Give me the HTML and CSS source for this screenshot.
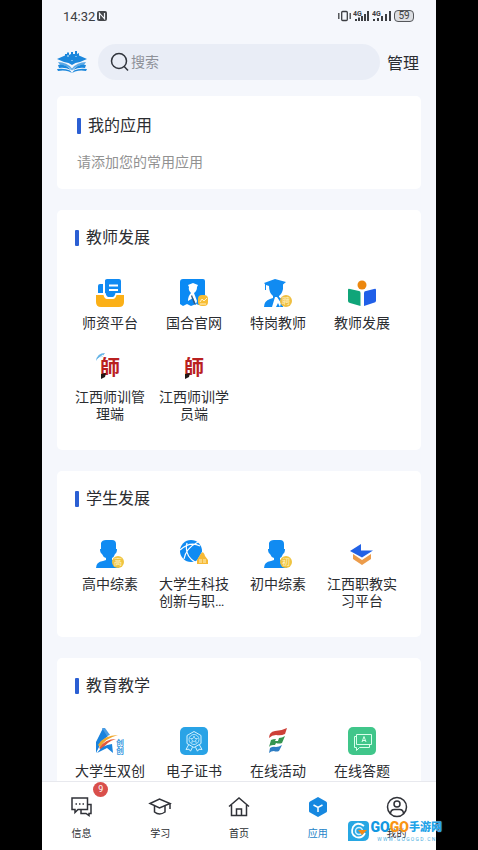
FILE: index.html
```html
<!DOCTYPE html>
<html lang="zh-CN">
  <head>
    <title>应用</title>
    <meta charset="utf-8" />
    <meta name="viewport" content="width=device-width, initial-scale=1" />
    <link rel="stylesheet" href="styles.css">
  </head>
  <body>
    <div class="phone">
      <div class="status-bar">
        <div class="status-left">
          <span>14:32</span>
          <svg width="10" height="10" viewBox="0 0 10 10">
            <rect width="10" height="10" rx="2" fill="#44464a" />
            <path d="M2.5 8V2.2L7.5 7.8V2" fill="none" stroke="#f5f7fc" stroke-width="1.2" />
          </svg>
        </div>
        <div class="status-right">
          <svg width="13" height="12" viewBox="0 0 13 12" fill="none" stroke="#3c3e42" stroke-width="1.3">
            <rect x="3.7" y="1.5" width="5.6" height="9" rx="1" />
            <path d="M.8 3v6M12.2 3v6" />
          </svg>
          <svg width="17" height="12" viewBox="0 0 17 12">
            <text x="0" y="6" class="net">4G</text>
            <path d="M3 11V9M6 11V7.500M9 11V6M12 11V4M15 11V1" stroke="#3c3e42" stroke-width="2" />
          </svg>
          <svg width="20" height="12" viewBox="0 0 20 12">
            <text x="0" y="6" class="net">4G</text>
            <path d="M2 11V9M6 11V8M10 11V6M14 11V4M18 11V1" stroke="#3c3e42" stroke-width="2" />
          </svg>
          <span class="battery">59</span>
        </div>
      </div>

      <header class="top-bar">
        <svg class="logo" width="30" height="22" viewBox="0 0 30 22" fill="#1b87dc">
          <path d="M0 8L8 4.500V3h2V1.500h2V4l2-1V1h2v2h2V0h2v3l2-1v2.500L30 8l-7 3q-5 .5-8 3-3-2.500-8-3z" />
          <path d="M1 11q9 0 14 6.500Q20 11 29 11l-2 3q-8 0-12 5.500Q11 14 3 14z" opacity=".7" />
          <path d="M1 14q8-1 13 5-6-3-12-2zM29 14q-8-1-13 5 6-3 12-2zM0 18q8-1 13 1.500L15 22l2-2.500q5-2.500 13-1.500l-1 2q-6-1-11 .5L15 22l-3-1.500Q7 19 1 20z" />
          <path d="M11 6V4M15 10V9M19 6V5" stroke="#d8ecfb" />
        </svg>
        <label class="search">
          <svg width="20" height="20" viewBox="0 0 20 20" fill="none" stroke="#30343c" stroke-width="1.5">
            <circle cx="9" cy="9" r="7.500" />
            <path d="M14.200 14.500L18 18.500" />
          </svg>
          <input type="text" placeholder="搜索" aria-label="搜索" />
        </label>
        <button class="manage">管理</button>
      </header>

      <main class="content">
        <section class="card mine">
          <h2>我的应用</h2>
          <p>请添加您的常用应用</p>
        </section>

        <section class="card">
          <h2>教师发展</h2>
          <div class="apps">
            <a class="app" href="#">
              <svg width="28" height="28" viewBox="0 0 28 28">
                <path d="M0 16h7.500q1 4 3.500 4h6q2.500 0 3.500-4H28v7q0 5-5 5H5q-5 0-5-5z" fill="#fbb017" />
                <path d="M9 1.500Q9 0 11 0h12q2 0 2 2v12h-5.500q-1 4-3 4h-4q-2 0-3-4H9z" fill="#108af3" />
                <path d="M2 7q0-2 2-2h3v9H2z" fill="#108af3" />
                <path d="M13 6.500h9M13 11h9" stroke="#fff" stroke-width="2" />
              </svg>
              <span>师资平台</span>
            </a>
            <a class="app" href="#">
              <svg width="28" height="28" viewBox="0 0 28 28">
                <path d="M0 3q0-3 3-3h20q2 0 2 2v22l-6 2-3-1-5 2-4-2-4 2-3-2z" fill="#0b8af4" />
                <path d="M8 6l5-2 5 2-1 2q0 4-3 6l3 8-1 3-3-6-5 3H8q0-5 3-8-3-3-2-6z" fill="#fff" />
                <path d="M12 16l4 10-2-1-3-8z" fill="#345a80" />
                <rect x="18" y="16" width="10" height="11" rx="4" fill="#f8bd35" />
                <path d="M20 23l2-3 2 2 3-3M20 25h6" stroke="#fff3c9" fill="none" />
              </svg>
              <span>国合官网</span>
            </a>
            <a class="app" href="#">
              <svg width="28" height="28" viewBox="0 0 28 28">
                <path d="M0 4L11 0l11 3-3 2.500V10q-1 5-4 7v1l4 3v7H0q0-6 6-8l3-1v-2q-4-3-4-10L2 6v5H1V5z" fill="#108bf2" />
                <path d="M11 18l-3 10h4l2-4 2 4 1-4-4-6z" fill="#fff" />
                <circle cx="22" cy="22" r="6" fill="#efbf42" />
                <text x="22" y="25" class="badge-text">聘</text>
              </svg>
              <span>特岗教师</span>
            </a>
            <a class="app" href="#">
              <svg width="28" height="28" viewBox="0 0 28 28">
                <circle cx="14" cy="6" r="4.500" fill="#ec870e" />
                <path d="M2 10l9 2q1.500 0 1.500 2v13L2 24q-2-.5-2-2V11q0-2 2-1z" fill="#10a579" />
                <path d="M26 10l-8 2q-2 0-2 2v13l9-3q3-.5 3-2V11q0-2-2-1z" fill="#205fe8" />
              </svg>
              <span>教师发展</span>
            </a>
            <a class="app" href="#">
              <svg width="28" height="28" viewBox="0 0 28 28">
                <path d="M0 8Q1 0 9 0L6 4Q2 4 0 8z" fill="#66b4e6" />
                <path d="M2 6l5-4" stroke="#fff" />
                <text x="14" y="22" class="shi">師</text>
                <path d="M5 21l5-1-1 4-4 2z" fill="#211816" />
              </svg>
              <span>江西师训管理端</span>
            </a>
            <a class="app" href="#">
              <svg width="28" height="28" viewBox="0 0 28 28">
                <text x="14" y="22" class="shi">師</text>
                <path d="M5 21l5-1-1 4-4 2z" fill="#211816" />
              </svg>
              <span>江西师训学员端</span>
            </a>
          </div>
        </section>

        <section class="card">
          <h2>学生发展</h2>
          <div class="apps">
            <a class="app" href="#">
              <svg width="28" height="28" viewBox="0 0 28 28">
                <path d="M5 3q1-3 5-3h6q4 0 4 4v5h1q0 4-2 5-1 3-3 4v2l7 3v5H0q0-6 7-7l3-1v-2q-3-1-4-4-2-1-2-5h1z" fill="#108bf2" />
                <circle cx="22" cy="22" r="6" fill="#efc442" />
                <text x="22" y="25" class="badge-text">高</text>
              </svg>
              <span>高中综素</span>
            </a>
            <a class="app" href="#">
              <svg width="28" height="28" viewBox="0 0 28 28">
                <circle cx="11" cy="11" r="11" fill="#108bf2" />
                <path d="M0 10Q10 1 20 6M4 19Q6 8 18 2M7 3Q4 15 15 22" fill="none" stroke="#fff" stroke-width="1.200" />
                <path d="M15 24l8-14 6 14z" fill="#fff" />
                <path d="M20 15q3-6 5 1l3 4v4H17v-4z" fill="#f6b936" />
                <path d="M19 20h7M19 22h7" stroke="#fff3c4" stroke-dasharray="3 1" />
              </svg>
              <span>大学生科技创新与职业发展</span>
            </a>
            <a class="app" href="#">
              <svg width="28" height="28" viewBox="0 0 28 28">
                <path d="M5 3q1-3 5-3h6q4 0 4 4v5h1q0 4-2 5-1 3-3 4v2l7 3v5H0q0-6 7-7l3-1v-2q-3-1-4-4-2-1-2-5h1z" fill="#108bf2" />
                <circle cx="22" cy="22" r="6" fill="#efc442" />
                <text x="22" y="25" class="badge-text">初</text>
              </svg>
              <span>初中综素</span>
            </a>
            <a class="app" href="#">
              <svg width="28" height="28" viewBox="0 0 28 28">
                <path d="M5 14l9 6 9-6v5l-9 6-9-6z" fill="#ec9c4b" />
                <path d="M13 4v6.500h12L14 17.500 2 11z" fill="#2262e6" />
              </svg>
              <span>江西职教实习平台</span>
            </a>
          </div>
        </section>

        <section class="card">
          <h2>教育教学</h2>
          <div class="apps">
            <a class="app" href="#">
              <svg width="28" height="28" viewBox="0 0 28 28">
                <path d="M0 15L7 1l5 8-6 5-6 12z" fill="#1982dd" />
                <path d="M6 1l5 8 3-1-5-7z" fill="#4a9ce3" />
                <path d="M2 18Q8 8 22 8 10 11 4 20z" fill="#f0a82c" />
                <path d="M3 21q6-9 17-9Q10 15 6 23z" fill="#e25a3d" />
                <path d="M1 26q5-8 15-9l1 9-6-5z" fill="#1982dd" />
                <text x="24" y="19" class="chuang">创</text>
                <text x="24" y="27" class="chuang">创</text>
              </svg>
              <span>大学生双创</span>
            </a>
            <a class="app" href="#">
              <svg width="28" height="28" viewBox="0 0 28 28" fill="none" stroke="#d6f3ff">
                <rect width="28" height="28" rx="5" fill="#29a3e6" stroke="none" />
                <path d="M14 4.500l7 4v8l-7 4-7-4v-8z" />
                <circle cx="14" cy="12.500" r="5" stroke-width=".8" />
                <path d="M14 9l1 2.500h2.500l-2 1.500.8 2.500-2.300-1.500-2.300 1.500.8-2.500-2-1.500H13z" stroke-width=".7" />
                <path d="M8.500 18L6 22.500l3-.3 1.500 2 2-4M19.500 18l2.500 4.500-3-.3-1.500 2-2-4" />
              </svg>
              <span>电子证书</span>
            </a>
            <a class="app" href="#">
              <svg width="28" height="28" viewBox="0 0 28 28">
                <path d="M5 11q0-6 6-7 6 0 12-3l-2 6q-4 2-9 1-4 0-7 3z" fill="#cd4038" />
                <path d="M5 20l2-7q2-1 5-1l-1 2 3 0 1-3q3 0 6-2l-3 7q-3 1-6 0l-1 2H9q-3 0-4 2z" fill="#369550" />
                <path d="M5 26l1-5q3-2 6-1 3 0 6-2l-3 6q-3 1-5 0-3 0-5 2z" fill="#2e7dc3" />
              </svg>
              <span>在线活动</span>
            </a>
            <a class="app" href="#">
              <svg width="28" height="28" viewBox="0 0 28 28" fill="none" stroke="#d9ffeb">
                <rect width="28" height="28" rx="5" fill="#40c68a" stroke="none" />
                <path d="M8.500 7.500h15v10h-15zM8 9.500H6.500v11h2v3l3-3h10v-2.500" />
                <path d="M14 15l2-5.500 2 5.500M14.500 13.500h3" />
              </svg>
              <span>在线答题</span>
            </a>
          </div>
        </section>
      </main>

      <nav class="tab-bar">
        <a class="tab" href="#">
          <svg width="24" height="24" viewBox="0 0 24 24" fill="none" stroke="#303238" stroke-width="1.500">
            <path d="M3 3h15.500v11.500H9L6 17.500v-3H3z" />
            <path d="M18.500 9.500H22v9h-2v2l-3-2h-5v-4" />
            <path d="M6.500 9H8M10 9h1.500M13.500 9H15" />
          </svg>
          <span>信息</span>
          <b class="count">9</b>
        </a>
        <a class="tab" href="#">
          <svg width="24" height="24" viewBox="0 0 24 24" fill="none" stroke="#303238" stroke-width="1.500">
            <path d="M2 8.500l9.500-4.500L22 8.500 11.500 13z" />
            <path d="M6.500 11v6q5 4 10.500 0v-6M22 8.500V14" />
          </svg>
          <span>学习</span>
        </a>
        <a class="tab" href="#">
          <svg width="24" height="24" viewBox="0 0 24 24" fill="none" stroke="#303238" stroke-width="1.500">
            <path d="M2 11.500L12 3l10 8.500M4.500 10v10.500h15V10M9.500 20v-6h5v6" />
          </svg>
          <span>首页</span>
        </a>
        <a class="tab active" href="#">
          <svg width="24" height="24" viewBox="0 0 24 24">
            <path d="M12 2l8 4.500q1 .5 1 1.500v8q0 1-1 1.500L12 22l-8-4.500q-1-.5-1-1.500V8q0-1 1-1.500z" fill="#1688e0" />
            <path d="M7.500 10l4.500 2.500 4.500-2.500M12 12.500v4.500" fill="none" stroke="#fff" stroke-width="1.500" />
          </svg>
          <span>应用</span>
        </a>
        <a class="tab" href="#">
          <svg width="24" height="24" viewBox="0 0 24 24" fill="none" stroke="#303238" stroke-width="1.500">
            <circle cx="12" cy="12" r="9.500" />
            <circle cx="12" cy="9" r="3" />
            <path d="M5.500 19q0-4.500 4-4.500h5q4 0 4 4.500" />
          </svg>
          <span>我的</span>
        </a>
      </nav>
    </div>

    <div class="watermark">
      <svg width="21" height="20" viewBox="0 0 21 20">
        <path d="M4 0h13q4 0 4 4v10q0 6-6 6H0V4q0-4 4-4z" fill="#27a7e3" />
        <path d="M16 5Q9 0 5 6q-3 7 3 10 6 2 9-4" fill="none" stroke="#fff" stroke-width="1.800" />
        <circle cx="11" cy="10" r="3.500" fill="none" stroke="#d3f1ff" stroke-width="1.500" />
        <path d="M10 9h9l-5 5z" fill="#f58a13" />
      </svg>
      <div class="mark-text">
        <div class="mark-name"><b class="blue">GO</b><b class="orange">GO</b><b class="cn">手游网</b></div>
        <div class="mark-url">W W W . G O G O G D . C N</div>
      </div>
    </div>
  </body>
</html>
```

FILE: styles.css
```css
* {
  box-sizing: border-box;
}
body {
  margin: 0;
  padding: 0 42px;
  background: #000000;
  color: #2b2d31;
  font-family: Roboto, "Noto Sans CJK SC", sans-serif;
}
a {
  color: inherit;
  text-decoration: none;
}
svg {
  display: block;
  flex: none;
}
.phone {
  display: flex;
  flex-direction: column;
  height: 100vh;
  background: #f5f7fc;
  overflow: hidden;
}

.status-bar {
  display: flex;
  justify-content: space-between;
  align-items: center;
  flex: none;
  height: 32px;
  padding: 0 22px 0 21px;
  font-size: 13px;
  color: #3c3e42;
}
.status-left,
.status-right {
  display: flex;
  align-items: center;
  gap: 2px;
}
.net {
  font-size: 7px;
  font-weight: bold;
  fill: #3c3e42;
}
.battery {
  width: 20px;
  height: 12px;
  border: 1px solid #55575b;
  border-radius: 4px;
  background: #dcdee2;
  font-size: 10px;
  line-height: 10px;
  text-align: center;
}

.top-bar {
  display: flex;
  align-items: center;
  flex: none;
  height: 60px;
  padding: 0 17px 0 15px;
}
.search {
  display: flex;
  align-items: center;
  flex: 1;
  min-width: 0;
  height: 36px;
  margin: 0 7px 0 11px;
  padding: 0 12px;
  gap: 1px;
  background: #e9edf6;
  border-radius: 18px;
}
.search input {
  flex: 1;
  min-width: 0;
  padding: 0;
  border: 0;
  outline: 0;
  background: none;
  font: inherit;
  font-size: 14px;
}
.search input::placeholder {
  color: #8e9199;
}
.manage {
  padding: 0;
  border: 0;
  background: none;
  color: #2b2d31;
  font: inherit;
  font-size: 16px;
}

.content {
  display: flex;
  flex-direction: column;
  gap: 21px;
  flex: 1;
  min-height: 0;
  padding: 4px 15px 0;
  overflow: hidden;
}
.card {
  flex: none;
  padding: 16px 17px 6px 11px;
  background: #ffffff;
  border-radius: 5px;
}
.card h2 {
  display: flex;
  align-items: center;
  gap: 7px;
  margin: 0 0 29px;
  padding-left: 7px;
  font-size: 16px;
  font-weight: normal;
  line-height: 24px;
}
.card h2::before {
  content: "";
  width: 4px;
  height: 16px;
  border-radius: 1px;
  background: #2b5fd3;
}
.card.mine {
  padding: 18px 20px 17px;
}
.mine h2 {
  margin-bottom: 14px;
  padding-left: 0;
}
.mine p {
  margin: 0;
  font-size: 14px;
  line-height: 20px;
  color: #929292;
}

.apps {
  display: grid;
  grid-template-columns: repeat(4, 1fr);
}
.app {
  display: flex;
  flex-direction: column;
  align-items: center;
  gap: 8px;
  padding-bottom: 21px;
}
.app span {
  display: -webkit-box;
  -webkit-box-orient: vertical;
  -webkit-line-clamp: 2;
  max-width: 72px;
  overflow: hidden;
  font-size: 14px;
  line-height: 17px;
  text-align: center;
}
.badge-text {
  font-size: 8px;
  text-anchor: middle;
  fill: #fff3c4;
}
.shi {
  font-family: "Noto Sans CJK SC", sans-serif;
  font-size: 20px;
  font-weight: bold;
  text-anchor: middle;
  fill: #b9201f;
}
.chuang {
  font-size: 8px;
  font-weight: bold;
  text-anchor: middle;
  fill: #3b9ae0;
}

.tab-bar {
  display: flex;
  flex: none;
  height: 69px;
  padding-top: 13px;
  background: #ffffff;
  border-top: 1px solid #e8e9ee;
}
.tab {
  position: relative;
  display: flex;
  flex: 1;
  flex-direction: column;
  align-items: center;
  gap: 8px;
  font-size: 10px;
  line-height: 14px;
}
.tab.active {
  color: #2384c8;
}
/* Unread count, over the top edge of the bar */
.count {
  position: absolute;
  top: -13px;
  left: 50%;
  width: 15px;
  height: 15px;
  margin-left: 12px;
  border-radius: 50%;
  background: #d94f4b;
  color: #ffffff;
  font-size: 9px;
  font-weight: normal;
  line-height: 15px;
  text-align: center;
}

.watermark {
  position: absolute;
  right: 36px;
  bottom: 8px;
  display: flex;
  align-items: center;
  gap: 2px;
}
.mark-name {
  display: flex;
  align-items: center;
  font-size: 14px;
  line-height: 17px;
  text-shadow: 0 0 1px #ffffff;
}
.mark-name b {
  font-weight: 900;
}
.mark-name .blue {
  color: #1298e2;
}
.mark-name .orange {
  color: #f99412;
}
.mark-name .cn {
  color: #22a3e8;
  font-size: 11px;
}
.mark-url {
  color: #4aaee0;
  font-size: 5px;
  line-height: 6px;
  text-align: center;
  white-space: nowrap;
}
```
